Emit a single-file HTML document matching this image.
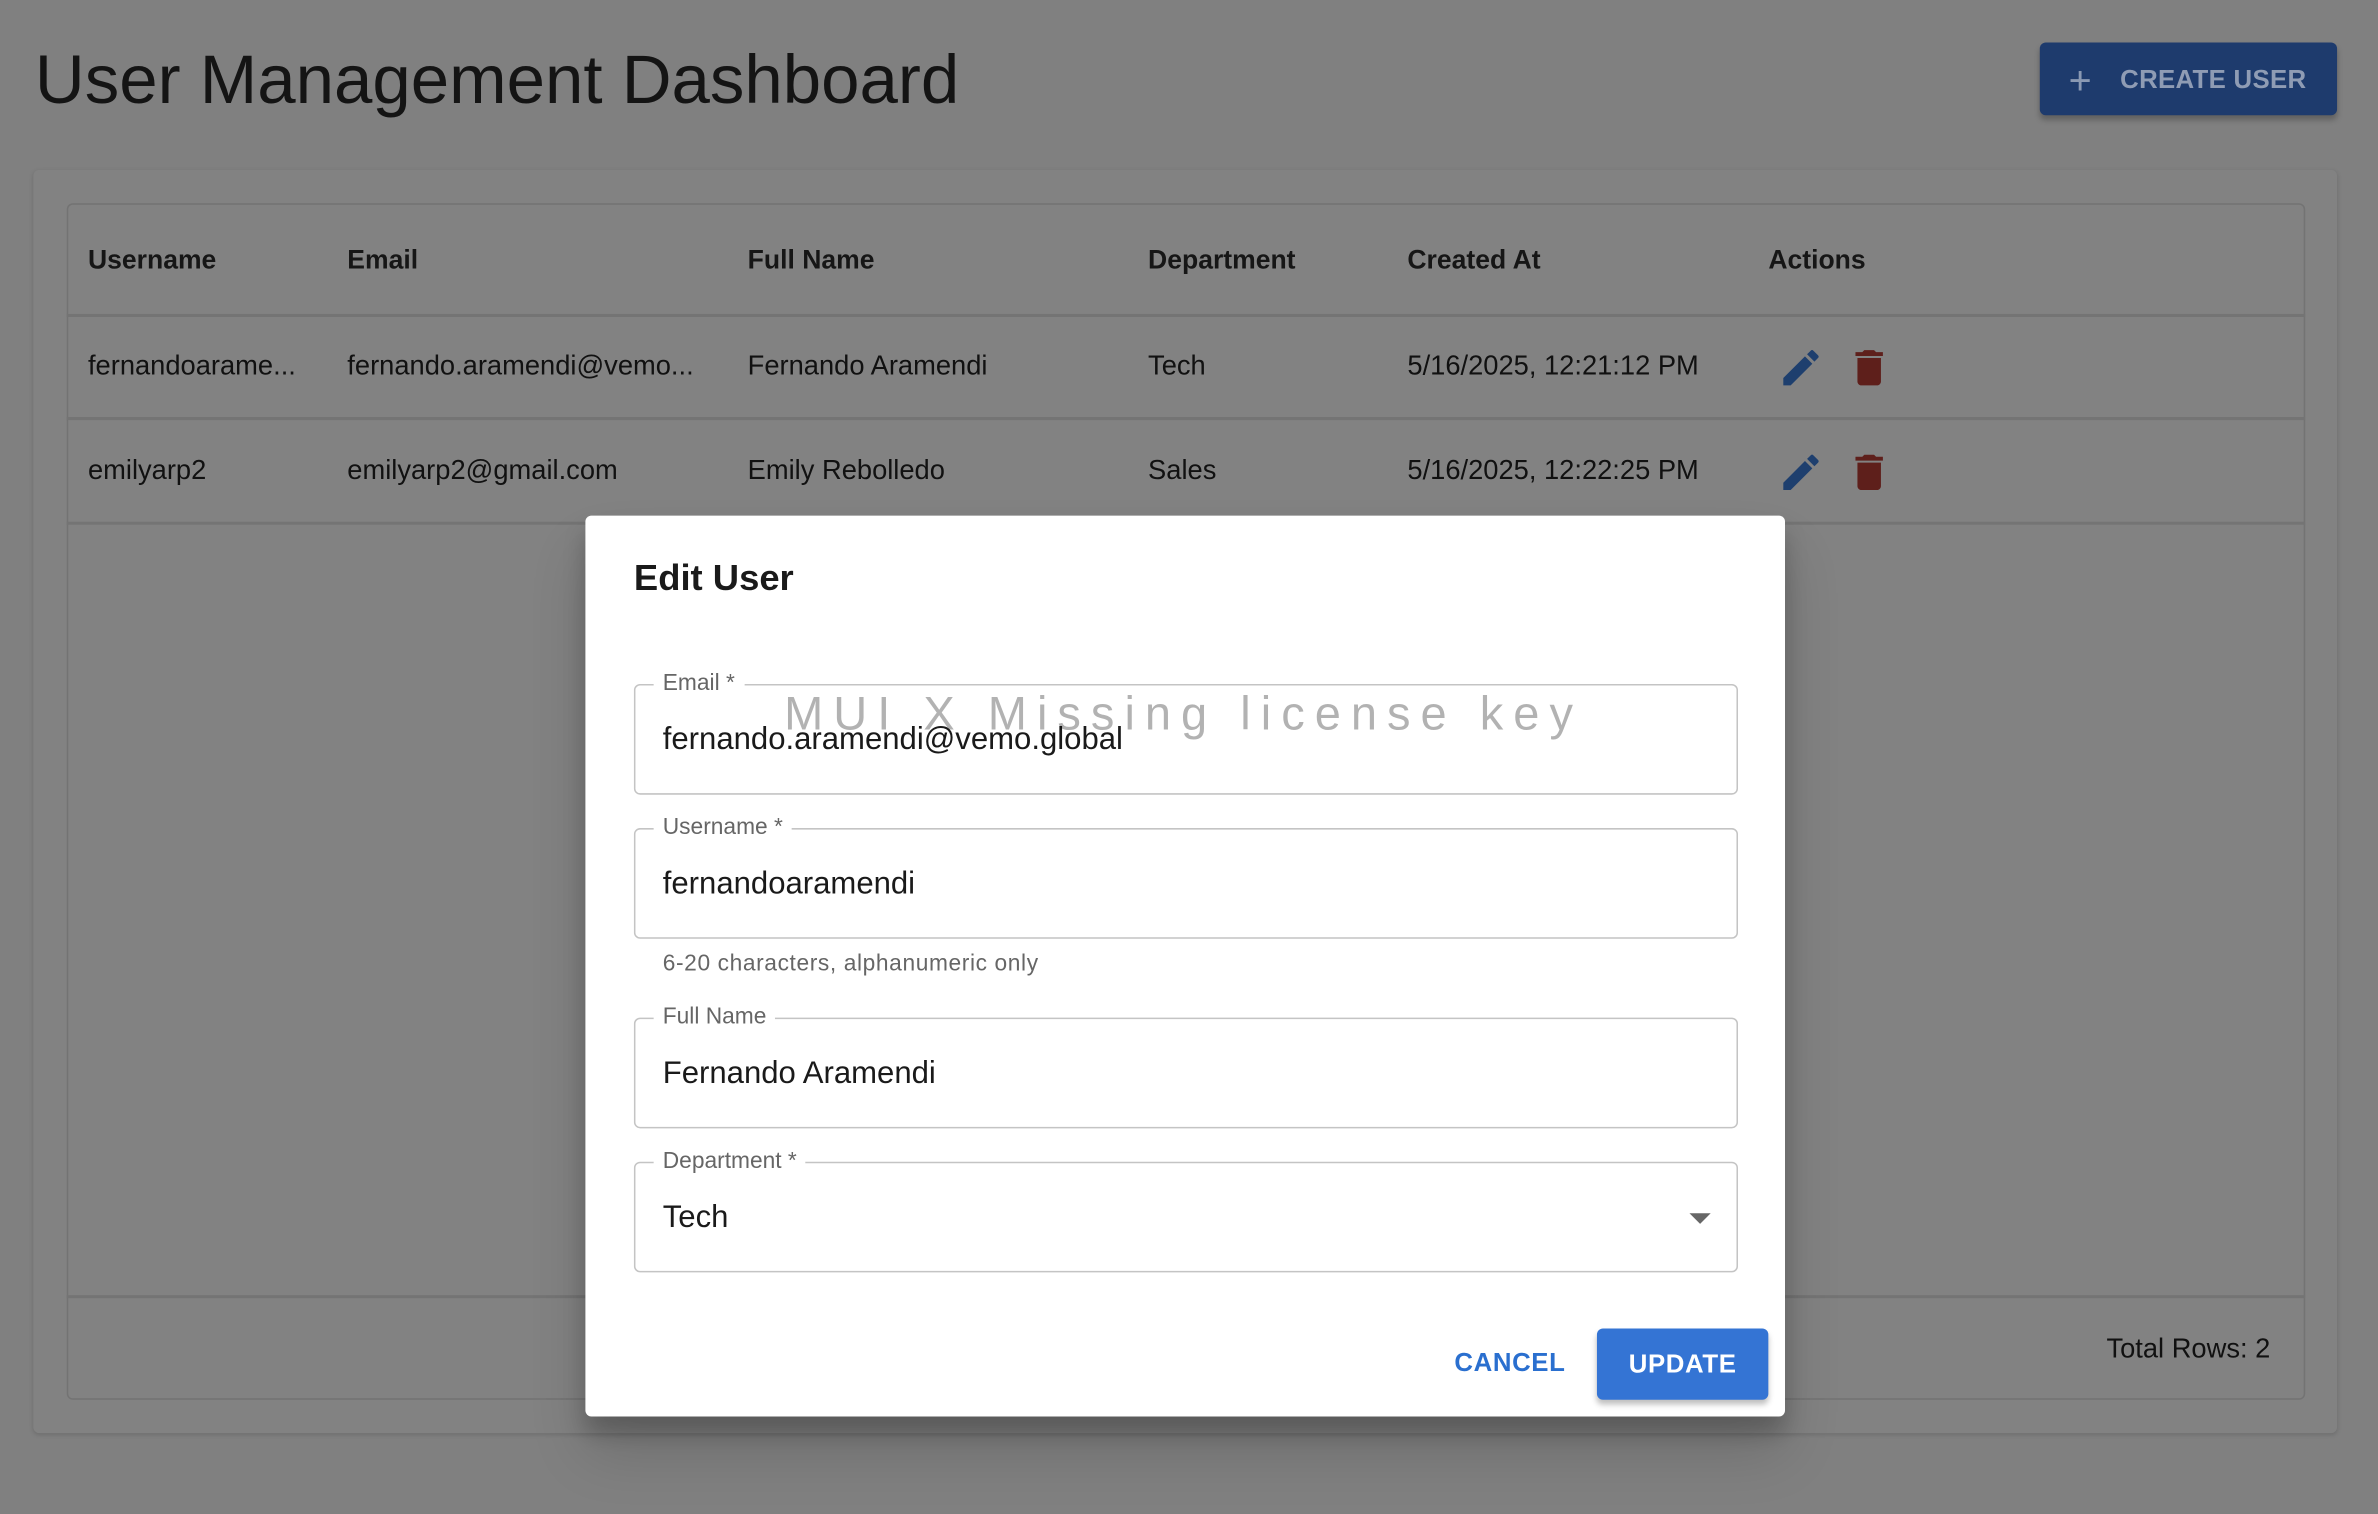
<!DOCTYPE html>
<html><head><meta charset="utf-8"><style>
*{box-sizing:border-box;margin:0;padding:0}
html,body{width:2378px;height:1514px;overflow:hidden;background:#808080}
#w{position:absolute;left:0;top:0;width:1568px;height:998px;transform:scale(1.51658);transform-origin:0 0;font-family:"Liberation Sans",Arial,sans-serif;color:#101010}
.a{position:absolute;white-space:nowrap}
.th{font-size:17.5px;font-weight:bold;color:#161616;top:161px}
.td{font-size:18px;color:#111}
.f{position:absolute;left:418px;width:728px;height:73px;border:1px solid #c4c4c4;border-radius:4px}
.lb{position:absolute;left:12px;top:-10px;background:#fff;padding:0 6px;font-size:15px;color:#666;line-height:18px}
.v{position:absolute;left:18px;top:24px;font-size:20.5px;color:#1a1a1a}
</style></head><body><div id="w">
<div class="a" style="left:23px;top:27px;font-size:45.5px;color:#141414">User Management Dashboard</div>
<div class="a" style="left:1345px;top:28px;width:196px;height:48px;background:#1e3b6d;border-radius:4px;box-shadow:0 3px 4px rgba(0,0,0,.25)"></div>
<div class="a" style="left:1364px;top:38px;font-size:26px;color:#8a99b3;font-weight:300">+</div>
<div class="a" style="left:1398px;top:43px;font-size:17px;color:#8f9cb4;font-weight:bold;letter-spacing:.2px">CREATE USER</div>
<div class="a" style="left:22px;top:112px;width:1519px;height:833px;background:#828282;border-radius:4px;box-shadow:0 1px 3px rgba(0,0,0,.15)"></div>
<div class="a" style="left:44px;top:134px;width:1476px;height:789px;border:1.5px solid #737373;border-radius:4px"></div>
<div class="a" style="left:44px;top:207px;width:1476px;height:2px;background:#747474"></div>
<div class="a" style="left:44px;top:275px;width:1476px;height:2px;background:#747474"></div>
<div class="a" style="left:44px;top:344px;width:1476px;height:2px;background:#747474"></div>
<div class="a" style="left:44px;top:854px;width:1476px;height:2px;background:#747474"></div>
<div class="a th" style="left:58px">Username</div>
<div class="a th" style="left:229px">Email</div>
<div class="a th" style="left:493px">Full Name</div>
<div class="a th" style="left:757px">Department</div>
<div class="a th" style="left:928px">Created At</div>
<div class="a th" style="left:1166px">Actions</div>
<div class="a td" style="left:58px;top:231px">fernandoarame...</div>
<div class="a td" style="left:229px;top:231px">fernando.aramendi@vemo...</div>
<div class="a td" style="left:493px;top:231px">Fernando Aramendi</div>
<div class="a td" style="left:757px;top:231px">Tech</div>
<div class="a td" style="left:928px;top:231px">5/16/2025, 12:21:12 PM</div>
<div class="a td" style="left:58px;top:300px">emilyarp2</div>
<div class="a td" style="left:229px;top:300px">emilyarp2@gmail.com</div>
<div class="a td" style="left:493px;top:300px">Emily Rebolledo</div>
<div class="a td" style="left:757px;top:300px">Sales</div>
<div class="a td" style="left:928px;top:300px">5/16/2025, 12:22:25 PM</div>
<svg class="a" style="left:1172px;top:227px" width="31" height="31" viewBox="0 0 24 24"><path fill="#1e3f6e" d="M3 17.25V21h3.75L17.81 9.94l-3.75-3.75zM20.71 7.04a1 1 0 0 0 0-1.41l-2.34-2.34a1 1 0 0 0-1.41 0l-1.83 1.83 3.75 3.75z"/></svg>
<svg class="a" style="left:1217px;top:227px" width="31" height="31" viewBox="0 0 24 24"><path fill="#5e1f1b" d="M6 19c0 1.1.9 2 2 2h8c1.1 0 2-.9 2-2V7H6zM19 4h-3.5l-1-1h-5l-1 1H5v2h14z"/></svg>
<svg class="a" style="left:1172px;top:296px" width="31" height="31" viewBox="0 0 24 24"><path fill="#1e3f6e" d="M3 17.25V21h3.75L17.81 9.94l-3.75-3.75zM20.71 7.04a1 1 0 0 0 0-1.41l-2.34-2.34a1 1 0 0 0-1.41 0l-1.83 1.83 3.75 3.75z"/></svg>
<svg class="a" style="left:1217px;top:296px" width="31" height="31" viewBox="0 0 24 24"><path fill="#5e1f1b" d="M6 19c0 1.1.9 2 2 2h8c1.1 0 2-.9 2-2V7H6zM19 4h-3.5l-1-1h-5l-1 1H5v2h14z"/></svg>
<div class="a td" style="right:71px;top:879px">Total Rows: 2</div>
<div class="a" style="left:386px;top:340px;width:791px;height:594px;background:#fff;border-radius:4px;box-shadow:0 11px 15px rgba(0,0,0,.2),0 24px 38px rgba(0,0,0,.14)">
</div>
<div class="a" style="left:418px;top:368px;font-size:24px;font-weight:bold;color:#1a1a1a">Edit User</div>
<div class="f" style="top:451px"><div class="lb">Email *</div><div class="v">fernando.aramendi@vemo.global</div></div>
<div class="f" style="top:546px"><div class="lb">Username *</div><div class="v">fernandoaramendi</div></div>
<div class="a" style="left:437px;top:627px;font-size:15px;color:#666;letter-spacing:.4px">6-20 characters, alphanumeric only</div>
<div class="f" style="top:671px"><div class="lb">Full Name</div><div class="v">Fernando Aramendi</div></div>
<div class="f" style="top:766px"><div class="lb">Department *</div><div class="v">Tech</div>
<div style="position:absolute;left:695px;top:33px;width:0;height:0;border-left:7px solid transparent;border-right:7px solid transparent;border-top:7px solid #666"></div></div>
<div class="a" style="left:517px;top:453px;font-size:31px;letter-spacing:6.6px;color:rgba(0,0,0,.3)">MUI X Missing license key</div>
<div class="a" style="left:959px;top:889px;font-size:17px;font-weight:bold;color:#2a6fcf;letter-spacing:.4px">CANCEL</div>
<div class="a" style="left:1053px;top:876px;width:113px;height:47px;background:#3474d4;border-radius:4px;box-shadow:0 3px 4px rgba(0,0,0,.25);color:#fff;font-size:17px;font-weight:bold;text-align:center;line-height:48px;letter-spacing:.4px">UPDATE</div>
</div></body></html>
